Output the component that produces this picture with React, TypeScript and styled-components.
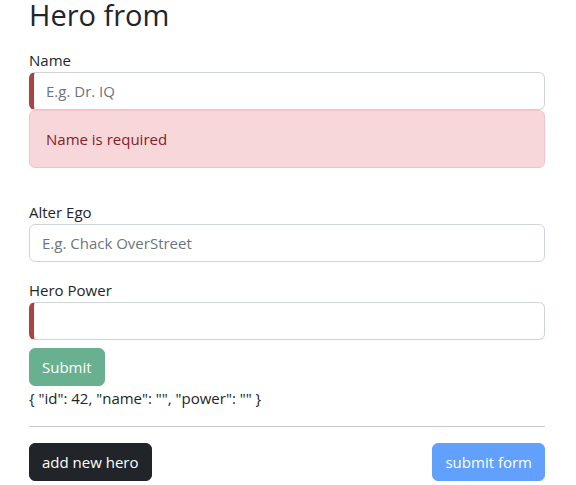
import React, { useState } from "react";
import styled, { createGlobalStyle, css } from "styled-components";

const GlobalStyle = createGlobalStyle`
  *, *::before, *::after {
    box-sizing: border-box;
  }
  body {
    margin: 0;
    background: #fff;
    color: #212529;
    font-family: "Open Sans", "Noto Sans", sans-serif;
    font-size: 15px;
    line-height: 24px;
  }
`;

const Page = styled.main`
  padding: 0 31px 4px 29px;
`;

const Title = styled.h1`
  margin: 0 0 18px;
  font-size: 29px;
  font-weight: 400;
  line-height: 30px;
`;

const Form = styled.form`
  margin: 0;
`;

const Field = styled.div<{ $gap: number }>`
  display: flex;
  flex-direction: column;
  margin-bottom: ${({ $gap }) => $gap}px;
`;

const Label = styled.label`
  align-self: flex-start;
`;

const TextInput = styled.input<{ $invalid?: boolean }>`
  width: 100%;
  height: 38px;
  padding: 6px 12px;
  border: 1px solid #ced4da;
  border-radius: 6px;
  background: #fff;
  color: inherit;
  font: inherit;

  &::placeholder {
    color: #6c757d;
    opacity: 1;
  }

  ${({ $invalid }) =>
    $invalid &&
    css`
      border-left: 5px solid #a94442;
    `}
`;

const Alert = styled.div`
  padding: 16px;
  border: 1px solid #f5c2c7;
  border-radius: 6px;
  background: #f8d7da;
  color: #842029;
`;

const Button = styled.button<{ $color: string }>`
  display: block;
  height: 38px;
  padding: 6px 12px;
  border: 1px solid ${({ $color }) => $color};
  border-radius: 6px;
  background: ${({ $color }) => $color};
  color: #fff;
  font: inherit;
  cursor: pointer;

  &:disabled {
    opacity: 0.65;
    cursor: default;
  }
`;

const Divider = styled.hr`
  height: 1px;
  margin: 16px 0;
  border: 0;
  background: #c8c9ca;
`;

const Actions = styled.div`
  display: flex;
  justify-content: space-between;
`;

export default function App() {
  const [name, setName] = useState("");
  const [alterEgo, setAlterEgo] = useState("");
  const [power, setPower] = useState("");
  const invalid = !name || !power;

  return (
    <>
      <GlobalStyle />
      <Page>
        <Title>Hero from</Title>
        <Form id="hero-form" onSubmit={(e) => e.preventDefault()}>
          <Field $gap={32}>
            <Label htmlFor="name">Name</Label>
            <TextInput
              id="name"
              placeholder="E.g. Dr. IQ"
              value={name}
              onChange={(e) => setName(e.target.value)}
              $invalid={!name}
            />
            {!name && <Alert role="alert">Name is required</Alert>}
          </Field>
          <Field $gap={16}>
            <Label htmlFor="alterEgo">Alter Ego</Label>
            <TextInput
              id="alterEgo"
              placeholder="E.g. Chack OverStreet"
              value={alterEgo}
              onChange={(e) => setAlterEgo(e.target.value)}
            />
          </Field>
          <Field $gap={8}>
            <Label htmlFor="power">Hero Power</Label>
            <TextInput
              id="power"
              value={power}
              onChange={(e) => setPower(e.target.value)}
              $invalid={!power}
            />
          </Field>
          <Button type="submit" $color="#198754" disabled={invalid}>
            Submit
          </Button>
        </Form>
        <div>{`{ "id": 42, "name": "${name}", "power": "${power}" }`}</div>
        <Divider />
        <Actions>
          <Button type="button" $color="#212529">
            add new hero
          </Button>
          <Button type="submit" form="hero-form" $color="#0d6efd" disabled={invalid}>
            submit form
          </Button>
        </Actions>
      </Page>
    </>
  );
}
